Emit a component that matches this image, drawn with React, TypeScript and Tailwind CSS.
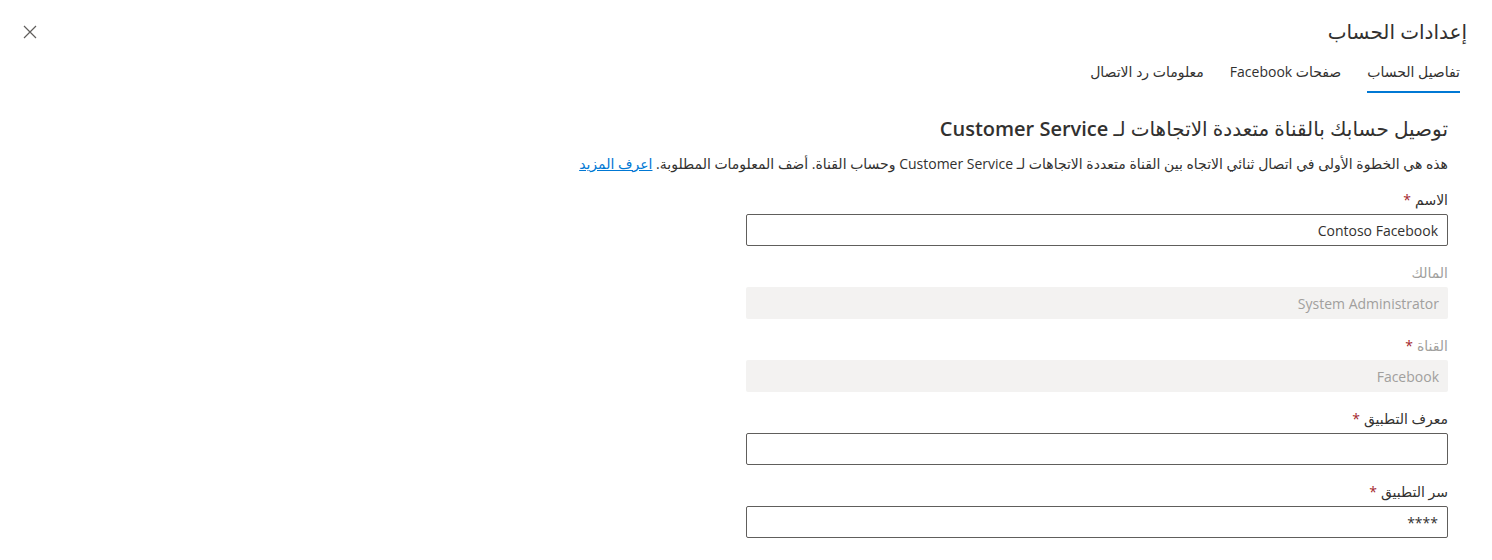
import React from "react";

const font = { fontFamily: '"Segoe UI", "Open Sans", "DejaVu Sans", sans-serif' };

function Field({
  label,
  required,
  disabled,
  value,
}: {
  label: string;
  required?: boolean;
  disabled?: boolean;
  value?: string;
}) {
  return (
    <div className="flex flex-col">
      <div
        className={
          "h-[20px] text-[14px] leading-[20px] font-medium " +
          (disabled ? "text-[#a19f9d]" : "text-[#323130]")
        }
      >
        {label}
        {required && <span className="text-[#a4262c] mr-[4px]">*</span>}
      </div>
      <div
        className={
          "mt-[4px] h-[32px] w-[702px] rounded-[2px] px-[9px] flex items-center text-[14px] " +
          (disabled
            ? "bg-[#f3f2f1] text-[#a19f9d]"
            : "border border-[#605e5c] bg-white text-[#323130]")
        }
      >
        {value}
      </div>
    </div>
  );
}

export default function App() {
  return (
    <div dir="rtl" style={font} className="w-[1492px] h-[560px] bg-white overflow-hidden text-[#323130]">
      <div className="flex items-start justify-between pr-[25px] pl-[22px] pt-[19px]">
        <div className="text-[20px] leading-[26px] font-normal">إعدادات الحساب</div>
        <svg width="16" height="16" viewBox="0 0 16 16" className="mt-[5px]">
          <path d="M2 2 L14 14 M14 2 L2 14" stroke="#605e5c" strokeWidth="1.2" fill="none" />
        </svg>
      </div>
      <div className="flex gap-[26px] pr-[32px] mt-[17px]">
        <div className="flex flex-col items-stretch">
          <div className="text-[14px] leading-[20px] font-medium">تفاصيل الحساب</div>
          <div className="h-[2px] bg-[#0078d4] mt-[9px]" />
        </div>
        <div className="text-[14px] leading-[20px]">صفحات Facebook</div>
        <div className="text-[14px] leading-[20px]">معلومات رد الاتصال</div>
      </div>
      <div className="pr-[44px] mt-[22px]">
        <div className="text-[20px] leading-[28px] font-medium">
          توصيل حسابك بالقناة متعددة الاتجاهات لـ <span className="font-semibold">Customer Service</span>
        </div>
        <div className="text-[14px] leading-[20px] mt-[11px]">
          هذه هي الخطوة الأولى في اتصال ثنائي الاتجاه بين القناة متعددة الاتجاهات لـ Customer Service وحساب القناة. أضف المعلومات المطلوبة.{" "}
          <a className="text-[#0078d4] underline">اعرف المزيد</a>
        </div>
        <div className="flex flex-col mt-[16px] gap-[17px]">
          <Field label="الاسم" required value="Contoso Facebook" />
          <Field label="المالك" disabled value="System Administrator" />
          <Field label="القناة" required disabled value="Facebook" />
          <Field label="معرف التطبيق" required value="" />
          <Field label="سر التطبيق" required value="****" />
        </div>
      </div>
    </div>
  );
}
